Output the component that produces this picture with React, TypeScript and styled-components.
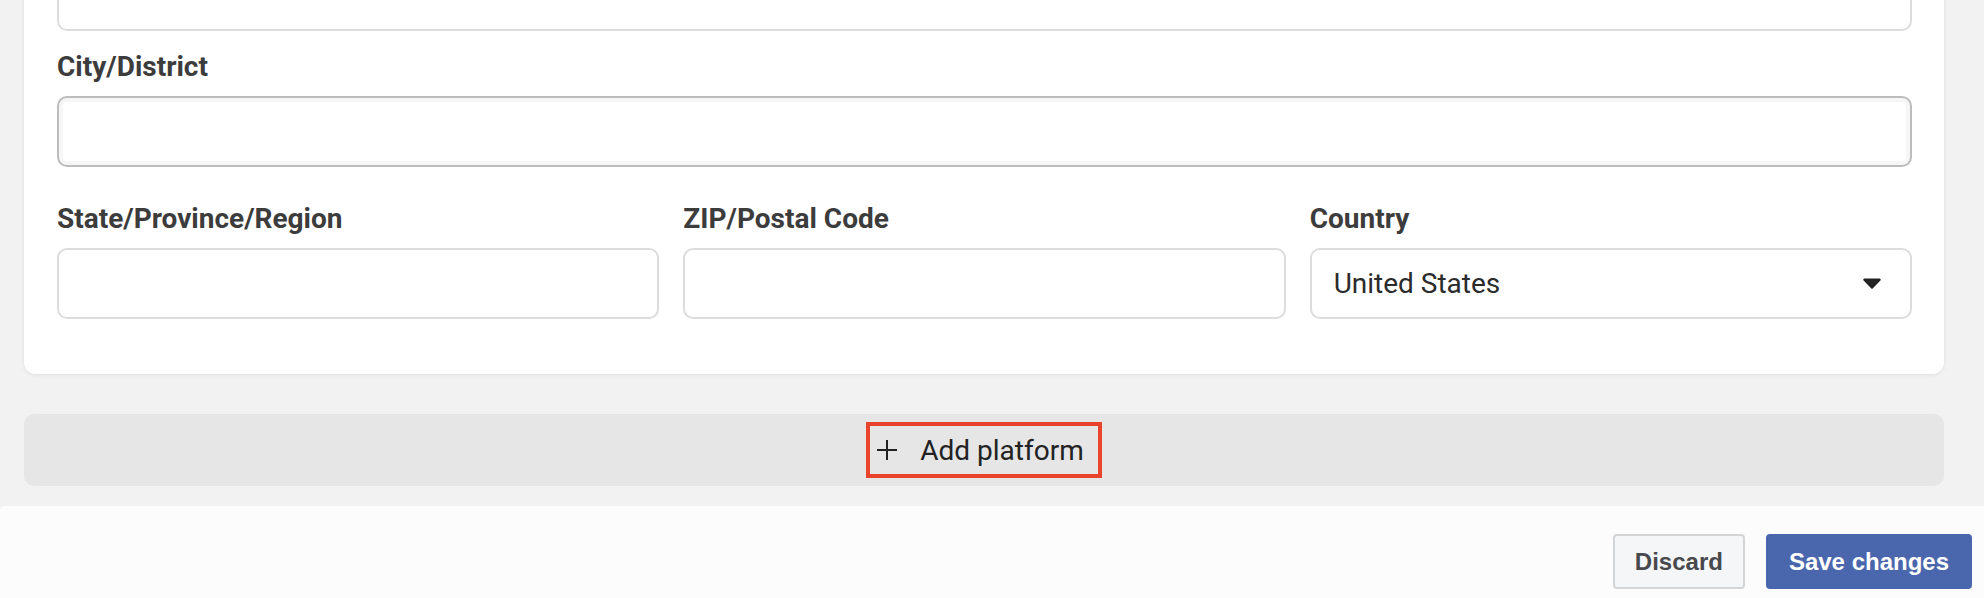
import styled, { createGlobalStyle } from 'styled-components'

const GlobalStyle = createGlobalStyle`
  html, body {
    margin: 0;
    padding: 0;
    background: #f2f2f2;
    overflow: hidden;
  }
  * {
    box-sizing: border-box;
  }
`

// page is scrolled: the first field of the card sits above the viewport
const Page = styled.div`
  display: flex;
  flex-direction: column;
  margin-top: -40px;
`

const Content = styled.div`
  display: flex;
  flex-direction: column;
  padding: 0 40px 0 24px;
`

const Card = styled.section`
  background: #ffffff;
  border-radius: 12px;
  box-shadow: 0 1px 4px rgba(0, 0, 0, 0.08);
  padding: 0 32px 55px 33px;
  display: flex;
  flex-direction: column;
`

const Field = styled.div<{ $gap?: number }>`
  display: flex;
  flex-direction: column;
  min-width: 0;
  margin-bottom: ${(p) => p.$gap ?? 0}px;
`

const Label = styled.label`
  font-family: Roboto, 'Noto Sans', sans-serif;
  font-weight: 700;
  font-size: 28px;
  line-height: 34px;
  color: #3c3c3c;
  margin-bottom: 12px;
`

const TextInput = styled.input<{ $focused?: boolean }>`
  height: 71px;
  width: 100%;
  border-radius: 10px;
  border: 2px solid ${(p) => (p.$focused ? '#bcbcbc' : '#dcdcdc')};
  box-shadow: ${(p) => (p.$focused ? 'inset 0 0 0 4px #f6f6f6' : 'none')};
  background: #ffffff;
  font-family: Roboto, sans-serif;
  font-size: 28px;
  padding: 0 22px;
  outline: none;
`

const Row = styled.div`
  display: grid;
  grid-template-columns: repeat(3, 1fr);
  gap: 24px;
`

const SelectBox = styled.div`
  height: 71px;
  border-radius: 10px;
  border: 2px solid #dcdcdc;
  background: #ffffff;
  display: flex;
  align-items: center;
  justify-content: space-between;
  padding: 0 29px 0 22px;
  font-family: Roboto, sans-serif;
  font-size: 28px;
  color: #2b2b2b;
`

const AddBar = styled.div`
  margin-top: 40px;
  height: 72px;
  background: #e6e6e6;
  border-radius: 10px;
  display: flex;
  align-items: center;
  justify-content: center;
`

const AddButton = styled.button`
  height: 56px;
  border: 4px solid #e9432b;
  background: transparent;
  display: flex;
  align-items: center;
  gap: 22px;
  padding: 0 14px 0 6px;
  font-family: Roboto, sans-serif;
  font-size: 28px;
  color: #222222;
  cursor: pointer;
`

const Footer = styled.footer`
  margin-top: 20px;
  height: 92px;
  background: #fcfcfc;
  border-top-left-radius: 4px;
  display: flex;
  align-items: flex-start;
  justify-content: flex-end;
  gap: 21px;
  padding: 28px 12px 0 0;
`

const FooterButton = styled.button<{ $primary?: boolean }>`
  height: 55px;
  border-radius: 4px;
  font-family: 'Liberation Sans', Arial, sans-serif;
  font-weight: 700;
  font-size: 24px;
  cursor: pointer;
  padding: ${(p) => (p.$primary ? '0 23px' : '0 20px')};
  border: ${(p) => (p.$primary ? 'none' : '2px solid #d3d4d6')};
  background: ${(p) => (p.$primary ? '#4a66ad' : '#f5f6f8')};
  color: ${(p) => (p.$primary ? '#ffffff' : '#48494d')};
`

const Caret = () => (
  <svg width="18" height="11" viewBox="0 0 18 11">
    <path d="M1.5 0.5h15a1.2 1.2 0 0 1 0.9 2l-7.5 7.8a1.2 1.2 0 0 1-1.8 0L0.6 2.5a1.2 1.2 0 0 1 0.9-2z" fill="#222" />
  </svg>
)

const Plus = () => (
  <svg width="22" height="22" viewBox="0 0 22 22">
    <path d="M11 1v20M1 11h20" stroke="#222" strokeWidth="2" />
  </svg>
)

export default function App() {
  return (
    <>
      <GlobalStyle />
      <Page>
        <Content>
          <Card>
            <Field $gap={19}>
              <TextInput aria-label="Street address" />
            </Field>
            <Field $gap={35}>
              <Label>City/District</Label>
              <TextInput $focused />
            </Field>
            <Row>
              <Field>
                <Label>State/Province/Region</Label>
                <TextInput />
              </Field>
              <Field>
                <Label>ZIP/Postal Code</Label>
                <TextInput />
              </Field>
              <Field>
                <Label>Country</Label>
                <SelectBox>
                  <span>United States</span>
                  <Caret />
                </SelectBox>
              </Field>
            </Row>
          </Card>
          <AddBar>
            <AddButton>
              <Plus />
              <span>Add platform</span>
            </AddButton>
          </AddBar>
        </Content>
        <Footer>
          <FooterButton>Discard</FooterButton>
          <FooterButton $primary>Save changes</FooterButton>
        </Footer>
      </Page>
    </>
  )
}
